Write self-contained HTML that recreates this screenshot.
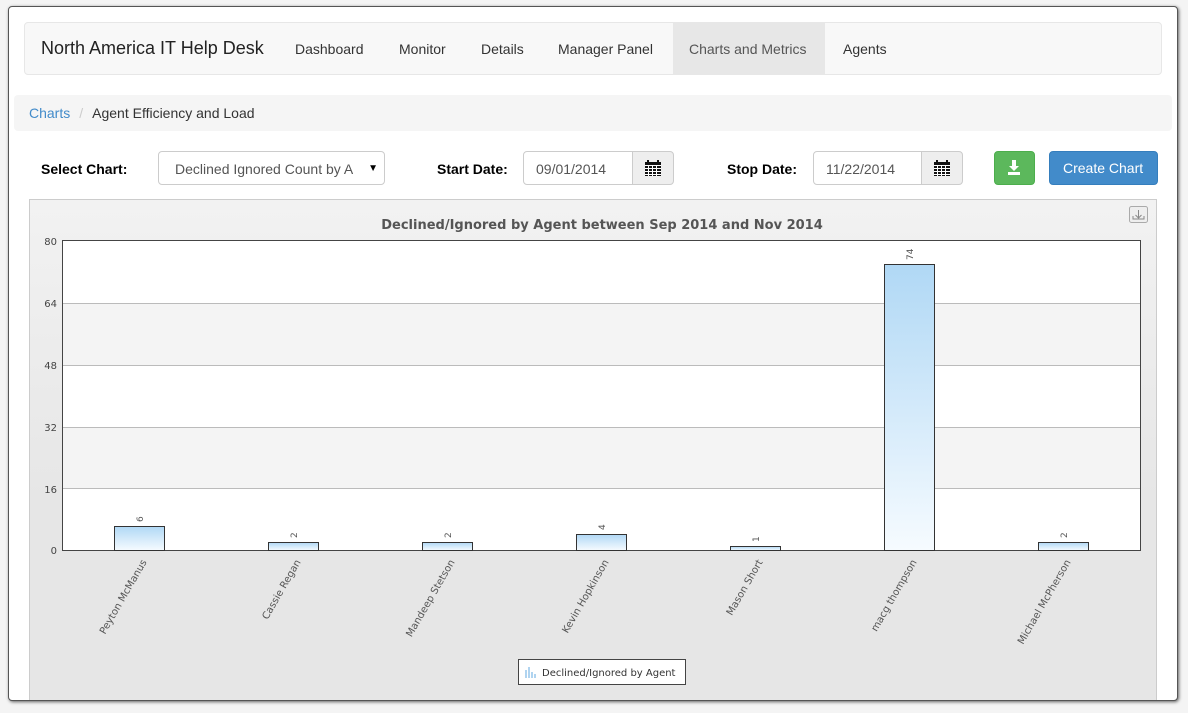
<!DOCTYPE html>
<html><head><meta charset="utf-8"><style>
*{box-sizing:border-box;margin:0;padding:0}
body{width:1188px;height:713px;background:#f4f4f4;font-family:"Liberation Sans",sans-serif;font-size:14px;color:#333;position:relative;overflow:hidden}
.frame{position:absolute;left:8px;top:6px;width:1170px;height:695px;background:#fff;border:1px solid #555;border-radius:4px;box-shadow:1px 1px 3px rgba(0,0,0,.6);overflow:hidden}
.nav{position:absolute;left:15px;top:15px;width:1138px;height:53px;background:#f8f8f8;border:1px solid #e7e7e7;border-radius:4px}
.nav .brand{position:absolute;left:16px;top:15px;font-size:18px;color:#222}
.nav a{position:absolute;top:18px;color:#333;font-size:14px}
.nav .act{top:0;height:51px;background:#e7e7e7;color:#555;padding:18px 16px 0;}
.bc{position:absolute;left:5px;top:88px;width:1158px;height:36px;background:#f5f5f5;border-radius:4px;padding:10px 15px}
.bc .l{color:#428bca}.bc .s{color:#ccc;padding:0 9px 0 9px}
.lbl{position:absolute;top:154px;font-weight:bold;font-size:14px;color:#000}
.inp{position:absolute;top:144px;height:34px;border:1px solid #ccc;border-radius:4px;background:#fff;color:#555;padding:9px 12px;font-size:14px}
.addon{position:absolute;top:144px;height:34px;width:42px;border:1px solid #ccc;border-radius:0 4px 4px 0;background:#eee}
.btn{position:absolute;top:144px;height:34px;border-radius:4px;color:#fff;font-size:14px}
.chart{position:absolute;left:20px;top:192px;width:1128px;height:510px;border:1px solid #ccc;background:linear-gradient(#f2f2f2,#e6e6e6 60%);overflow:hidden}
</style></head><body>
<div class="frame">
<div class="nav">
<div class="brand">North America IT Help Desk</div>
<a style="left:270px">Dashboard</a>
<a style="left:374px">Monitor</a>
<a style="left:456px">Details</a>
<a style="left:533px">Manager Panel</a>
<a class="act" style="left:648px;width:152px">Charts and Metrics</a>
<a style="left:818px">Agents</a>
</div>
<div class="bc"><span class="l">Charts</span><span class="s">/</span>Agent Efficiency and Load</div>
<div class="lbl" style="left:32px">Select Chart:</div>
<div class="inp" style="left:149px;width:227px;padding-left:16px"><span style="display:inline-block;width:178px;overflow:hidden;white-space:nowrap;vertical-align:top">Declined Ignored Count by A</span><span style="position:absolute;right:6px;top:11px;font-size:10px;color:#000">▼</span></div>
<div class="lbl" style="left:428px">Start Date:</div>
<div class="inp" style="left:514px;width:112px;border-radius:4px 0 0 4px">09/01/2014</div>
<div class="addon" style="left:623px"><svg width="40" height="32" viewBox="0 0 40 32"><rect x="12" y="10" width="16" height="14" fill="#111"/><g stroke="#fff" stroke-width="1"><line x1="12" y1="13.5" x2="28" y2="13.5"/><line x1="12" y1="16.5" x2="28" y2="16.5"/><line x1="12" y1="19.5" x2="28" y2="19.5"/><line x1="12" y1="22.5" x2="28" y2="22.5"/><line x1="15.5" y1="14" x2="15.5" y2="24"/><line x1="19.5" y1="14" x2="19.5" y2="24"/><line x1="23.5" y1="14" x2="23.5" y2="24"/></g><rect x="14" y="8" width="2" height="3" fill="#111"/><rect x="24" y="8" width="2" height="3" fill="#111"/></svg></div>
<div class="lbl" style="left:718px">Stop Date:</div>
<div class="inp" style="left:804px;width:112px;border-radius:4px 0 0 4px">11/22/2014</div>
<div class="addon" style="left:912px"><svg width="40" height="32" viewBox="0 0 40 32"><rect x="12" y="10" width="16" height="14" fill="#111"/><g stroke="#fff" stroke-width="1"><line x1="12" y1="13.5" x2="28" y2="13.5"/><line x1="12" y1="16.5" x2="28" y2="16.5"/><line x1="12" y1="19.5" x2="28" y2="19.5"/><line x1="12" y1="22.5" x2="28" y2="22.5"/><line x1="15.5" y1="14" x2="15.5" y2="24"/><line x1="19.5" y1="14" x2="19.5" y2="24"/><line x1="23.5" y1="14" x2="23.5" y2="24"/></g><rect x="14" y="8" width="2" height="3" fill="#111"/><rect x="24" y="8" width="2" height="3" fill="#111"/></svg></div>
<div class="btn" style="left:985px;width:41px;background:#5cb85c;border:1px solid #4cae4c"><svg width="39" height="32" viewBox="0 0 39 32"><path d="M17 8h4v6h3l-5 5-5-5h3z" fill="#fff"/><rect x="13" y="20" width="12" height="3" fill="#fff"/></svg></div>
<div class="btn" style="left:1040px;width:109px;background:#428bca;border:1px solid #357ebd;padding:8px 0 0 13px">Create Chart</div>
<div class="chart">
<svg width="1128" height="510" style="position:absolute;left:-1px;top:-1px" viewBox="29 199 1128 510">
<text x="602" y="229" text-anchor="middle" font-family="DejaVu Sans" font-weight="bold" font-size="13" fill="#555">Declined/Ignored by Agent between Sep 2014 and Nov 2014</text>
<rect x="1129.5" y="206.5" width="18" height="16" rx="2" fill="#eee" stroke="#aaa"/>
<path d="M1138.5 210v8M1135.5 215l3 3 3-3M1133 216v3h11v-3" stroke="#888" fill="none"/>
<rect x="62.5" y="240.5" width="1078" height="310" fill="#fff"/>
<rect x="63" y="303" width="1077" height="62" fill="#f4f4f4"/>
<rect x="63" y="427" width="1077" height="62" fill="#f4f4f4"/>
<g stroke="#bbb"><line x1="63" y1="303.5" x2="1140" y2="303.5"/><line x1="63" y1="365.5" x2="1140" y2="365.5"/><line x1="63" y1="427.5" x2="1140" y2="427.5"/><line x1="63" y1="488.5" x2="1140" y2="488.5"/></g>
<rect x="62.5" y="240.5" width="1078" height="310" fill="none" stroke="#444"/>
<g font-family="DejaVu Sans" font-size="10" fill="#444" text-anchor="end">
<text x="57" y="245">80</text><text x="57" y="307">64</text><text x="57" y="369">48</text><text x="57" y="431">32</text><text x="57" y="493">16</text><text x="57" y="554">0</text></g>
<defs><linearGradient id="g" x1="0" y1="0" x2="0" y2="1"><stop offset="0" stop-color="#b0d8f5"/><stop offset="1" stop-color="#f6fbff"/></linearGradient></defs>
<g stroke="#333" fill="url(#g)">
<rect x="114.5" y="526.5" width="50" height="24"/>
<rect x="268.5" y="542.5" width="50" height="8"/>
<rect x="422.5" y="542.5" width="50" height="8"/>
<rect x="576.5" y="534.5" width="50" height="16"/>
<rect x="730.5" y="546.5" width="50" height="4"/>
<rect x="884.5" y="264.5" width="50" height="286"/>
<rect x="1038.5" y="542.5" width="50" height="8"/>
</g>
<g font-family="DejaVu Sans" font-size="9" fill="#555">
<text transform="translate(143,522) rotate(-90)">6</text>
<text transform="translate(297,538) rotate(-90)">2</text>
<text transform="translate(451,538) rotate(-90)">2</text>
<text transform="translate(605,530) rotate(-90)">4</text>
<text transform="translate(759,542) rotate(-90)">1</text>
<text transform="translate(913,260) rotate(-90)">74</text>
<text transform="translate(1067,538) rotate(-90)">2</text>
</g>
<g font-family="DejaVu Sans" font-size="10" fill="#555" text-anchor="end">
<text transform="translate(147,562) rotate(-60)">Peyton McManus</text>
<text transform="translate(301,562) rotate(-60)">Cassie Regan</text>
<text transform="translate(455,562) rotate(-60)">Mandeep Stetson</text>
<text transform="translate(609,562) rotate(-60)">Kevin Hopkinson</text>
<text transform="translate(763,562) rotate(-60)">Mason Short</text>
<text transform="translate(917,562) rotate(-60)">macg thompson</text>
<text transform="translate(1071,562) rotate(-60)">Michael McPherson</text>
</g>
<rect x="518.5" y="659.5" width="167" height="25" fill="#fff" stroke="#444"/>
<g fill="#b0d4f0"><rect x="525" y="670" width="2" height="8"/><rect x="528" y="667" width="2" height="11"/><rect x="531" y="672" width="2" height="6"/><rect x="534" y="674" width="2" height="4"/></g>
<text x="542" y="676" font-family="DejaVu Sans" font-size="10" fill="#333">Declined/Ignored by Agent</text>
</svg>
</div>
</div>
</body></html>
